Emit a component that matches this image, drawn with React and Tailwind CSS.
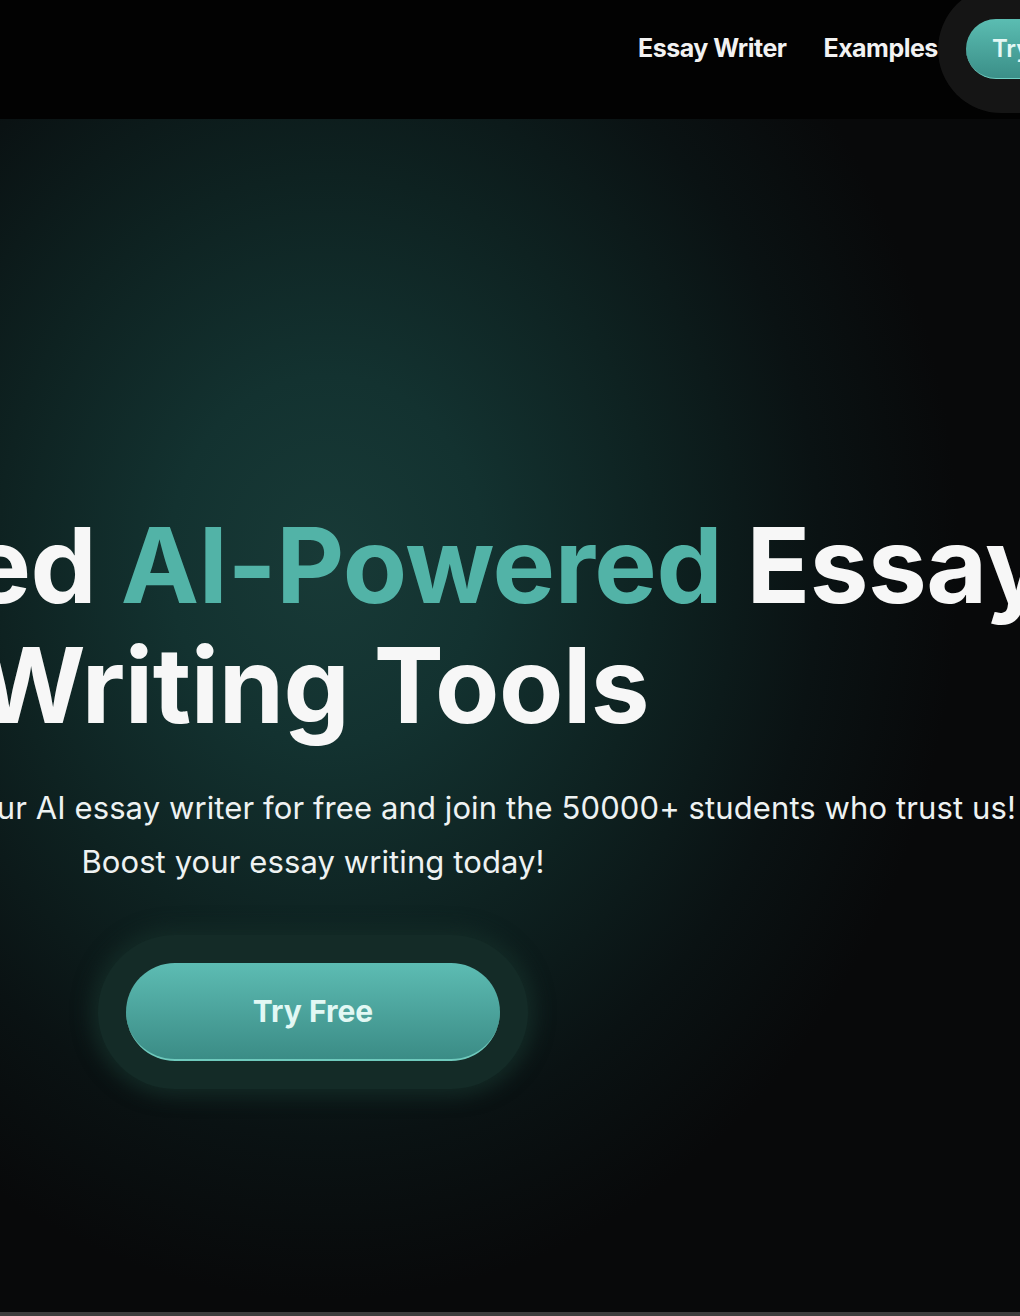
export default function App() {
  return (
    <div
      className="w-[1020px] h-[1316px] overflow-hidden flex flex-col bg-black"
      style={{ fontFamily: "Inter, 'Noto Sans', sans-serif" }}
    >
      {/* Nav */}
      <nav className="h-[119px] shrink-0 bg-[#020202] relative">
        <div className="flex items-center h-[124px] mt-[-13px] ml-[638px] w-[600px]">
          <a className="text-[25px] font-bold text-[#f2f2f2] tracking-[-0.5px] whitespace-nowrap">Essay Writer</a>
          <a className="ml-[37px] text-[25px] font-bold text-[#f2f2f2] tracking-[-0.5px] whitespace-nowrap">Examples</a>
          <div className="h-[127px] pl-[28px] pr-[28px] flex items-center rounded-full bg-[#151515]">
            <button className="h-[60px] px-[26px] rounded-full bg-gradient-to-b from-[#5bbdb2] to-[#3b8f88] border-b border-[#6fcfc3] text-[24px] font-semibold text-[#e4f8f5] whitespace-nowrap">
              Try Free
            </button>
          </div>
        </div>
      </nav>

      {/* Hero */}
      <main className="flex-1 flex flex-col bg-[radial-gradient(ellipse_62%_62%_at_32%_37%,#183a37_0%,#133230_25%,#0e2221_52%,#0a1213_78%,#08090a_100%)]">
        <div className="ml-[-487px] w-[1600px] flex flex-col items-center text-center pt-[386px]">
          <h1 className="text-[105px] leading-[120px] font-bold text-[#f7f7f7] tracking-[-0.5px] whitespace-nowrap">
            Advanced <span className="text-[#52b3a7]">AI-Powered</span> Essay
            <br />
            Writing Tools
          </h1>
          <p className="mt-[36px] text-[31px] leading-[54px] tracking-[0.1px] text-[#eef2f2] whitespace-nowrap">
            Get better marks and try our AI essay writer for free and join the 50000+ students who trust us!
            <br />
            Boost your essay writing today!
          </p>
          <div className="mt-[46px] rounded-full p-[28px] bg-[#142b27] shadow-[0_0_18px_8px_rgba(20,43,39,0.85)]">
            <button className="w-[374px] h-[98px] rounded-full bg-gradient-to-b from-[#5dbcb3] to-[#3b8c86] border-b-2 border-[#6fcabd] text-[30px] font-bold text-[#e2f8f4]">
              Try Free
            </button>
          </div>
        </div>
      </main>
      <div className="h-[4px] shrink-0 bg-[#3d3d3d]" />
    </div>
  );
}
